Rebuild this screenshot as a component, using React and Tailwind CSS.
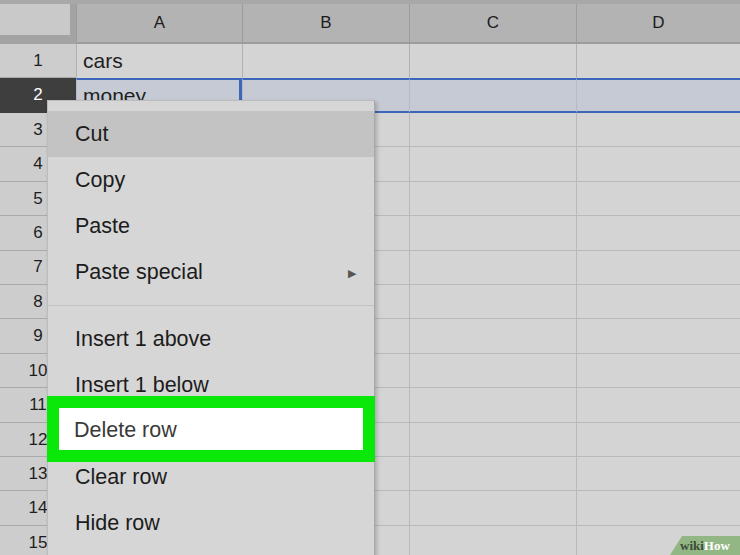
import React from "react";

const cols = [
  { label: "A", w: "w-[166px]" },
  { label: "B", w: "w-[167px]" },
  { label: "C", w: "w-[167px]" },
  { label: "D", w: "flex-1" },
];

const rows = Array.from({ length: 15 }, (_, i) => i + 1);

const cellText = { 1: "cars", 2: "money" };

const MenuItem = ({ children, active, arrow }) => (
  <div
    className={`h-[46px] flex items-center justify-between pl-[27px] pr-[18px] ${
      active ? "bg-[#c3c3c3]" : ""
    }`}
  >
    <span>{children}</span>
    {arrow && <span className="text-[11px] text-[#555] mt-[2px]">▶</span>}
  </div>
);

const App = () => {
  return (
    <div
      className="relative w-[740px] h-[555px] overflow-hidden bg-[#d4d4d4] text-[#1e1e1e]"
      style={{ fontFamily: "'Liberation Sans', Arial, sans-serif" }}
    >
      {/* column headers */}
      <div className="flex h-[44px] pt-[4px] bg-[#a8a8a8]">
        <div className="w-[76px] h-full bg-[#a3a3a3] flex flex-col">
          <div className="w-[70px] h-[31px] bg-[#c9c9c9]" />
        </div>
        {cols.map((c) => (
          <div
            key={c.label}
            className={`${c.w} h-full bg-[#b3b3b3] border-l border-b-2 border-[#9c9c9c] flex items-center justify-center text-[17px] text-[#1c1c1c]`}
          >
            {c.label}
          </div>
        ))}
      </div>

      {/* grid rows */}
      {rows.map((r) => {
        const sel = r === 2;
        return (
          <div key={r} className="flex h-[34.43px]">
            <div
              className={`w-[76px] h-full flex items-center justify-center text-[17px] border-b ${
                sel
                  ? "bg-[#3e3e3e] text-white border-[#3e3e3e]"
                  : "bg-[#cdcdcd] border-[#a9a9a9]"
              }`}
            >
              {r}
            </div>
            {cols.map((c, i) => (
              <div
                key={c.label}
                className={`${c.w} h-full border-l flex items-center px-[6px] text-[21px] ${
                  sel
                    ? `bg-[#c6cad4] border-t-2 border-b-2 border-t-[#3b66b9] border-b-[#3b66b9] border-l-[#b7bac2] ${
                        i === 0 ? "border-r-[3px] border-r-[#3b66b9]" : ""
                      }`
                    : r === 1
                    ? "border-b border-[#b0b0b0] border-b-transparent"
                    : "border-b border-[#b9b9b9]"
                }`}
              >
                {i === 0 && cellText[r]}
              </div>
            ))}
          </div>
        );
      })}

      {/* context menu */}
      <div className="absolute left-[47px] top-[100px] w-[328px] h-[470px] bg-[#d6d6d6] border border-[#bcbcbc] border-r-[#a9a9a9] shadow-[2px_2px_4px_rgba(0,0,0,0.2)] pt-[10px] text-[21.5px] text-[#1c1c1c]">
        <MenuItem active>Cut</MenuItem>
        <MenuItem>Copy</MenuItem>
        <MenuItem>Paste</MenuItem>
        <MenuItem arrow>Paste special</MenuItem>
        <div className="my-[10px] border-t border-[#c2c2c2]" />
        <MenuItem>Insert 1 above</MenuItem>
        <MenuItem>Insert 1 below</MenuItem>
        <div className="relative h-[46px]">
          <div className="absolute left-[-1px] right-[-1px] top-[-12px] h-[66px] border-[12px] border-[#0ae80a] bg-white flex items-center pl-[15px] pt-[3px] text-[#3a3a3a]">
            Delete row
          </div>
        </div>
        <MenuItem>Clear row</MenuItem>
        <MenuItem>Hide row</MenuItem>
      </div>

      {/* wikiHow badge */}
      <div className="absolute right-0 bottom-0 w-[70px] h-[19px]">
        <svg className="absolute inset-0" width="70" height="19" viewBox="0 0 70 19">
          <polygon points="12,0 70,0 70,19 0,19" fill="#93b784" />
        </svg>
        <div
          className="relative flex items-center h-full pl-[10px] text-[13px] font-bold leading-none"
          style={{ fontFamily: "'Liberation Serif', 'Times New Roman', serif" }}
        >
          <span className="text-[#3c4a38]">wiki</span>
          <span className="text-white">How</span>
        </div>
      </div>
    </div>
  );
};

export default App;
